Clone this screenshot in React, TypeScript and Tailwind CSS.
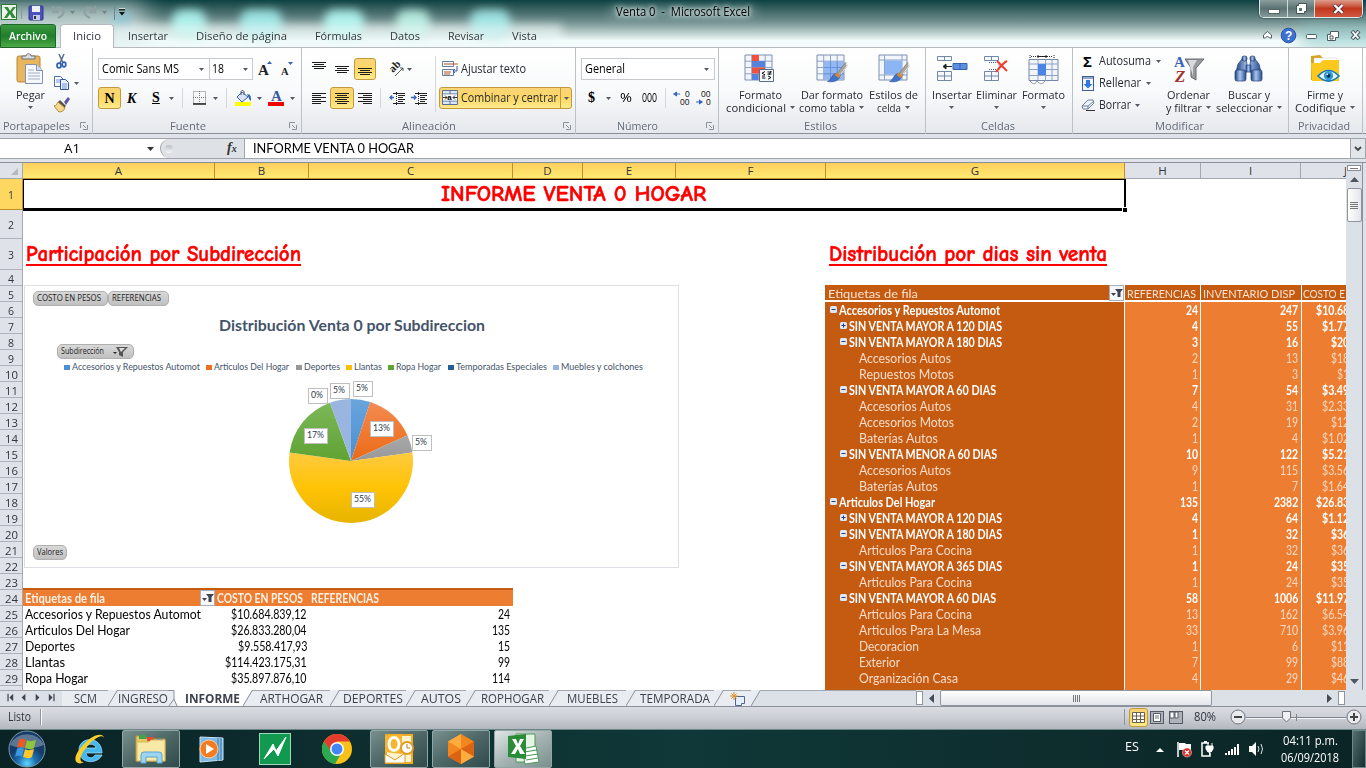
import React, { useLayoutEffect, useRef } from "react";

const UI = "font-['Open_Sans','Noto_Sans',sans-serif]";
const CELL = "font-['Lato','Open_Sans',sans-serif]";

/* Text squeezed or stretched to a given width in pixels. */
function T({ w, children, className = "" }: { w: number; children: string; className?: string }) {
  const outer = useRef<HTMLSpanElement>(null);
  const inner = useRef<HTMLSpanElement>(null);
  useLayoutEffect(() => {
    const o = outer.current;
    const i = inner.current;
    if (!o || !i) return;
    i.style.transform = "none";
    const natural = i.getBoundingClientRect().width;
    o.style.width = w + "px";
    i.style.transform = `scaleX(${w / natural})`;
  }, [w, children]);
  return (
    <span ref={outer} className={`inline-block shrink-0 whitespace-pre ${className}`}>
      <span ref={inner} className="inline-block origin-left whitespace-pre">{children}</span>
    </span>
  );
}

const Arrow = ({ c = "" }: { c?: string }) => (
  <svg className={`shrink-0 ${c}`} width="5" height="3" viewBox="0 0 5 3"><path d="M0 0h5L2.5 3z" fill="#555b66" /></svg>
);
const VSep = ({ c = "" }: { c?: string }) => <div className={`h-5 w-px shrink-0 bg-[#d3d6dc] ${c}`} />;

const Launcher = () => (
  <svg width="8" height="8" viewBox="0 0 8 8" fill="none" stroke="#8c929c"><path d="M.5 6V.5H6M3 3l3 3" /><path d="M7.500 3v4.500H3" /></svg>
);

function Group({ w, label, lw, launcher, children }: { w: string; label: string; lw: number; launcher?: boolean; children: React.ReactNode }) {
  return (
    <div className={`flex h-[86px] shrink-0 flex-col border-r border-[#bcc0c7] ${w}`}>
      <div className="flex h-[70px] shrink-0">{children}</div>
      <div className="flex h-[15px] items-center pr-1 text-[11.500px] leading-[14px] text-[#646b7a]">
        <div className={`flex flex-1 justify-center ${launcher ? "pr-2" : "pr-0"}`}><T w={lw}>{label}</T></div>
        {launcher && <Launcher />}
      </div>
    </div>
  );
}

function Big({ w, icon, a, aw, b, bw, arrow = true }: { w: string; icon: React.ReactNode; a: string; aw: number; b?: string; bw?: number; arrow?: boolean }) {
  return (
    <div className={`flex shrink-0 flex-col items-center pt-[5px] text-[11.500px] leading-[13px] text-[#262b34] ${w}`}>
      <div className="flex h-8 items-center justify-center">{icon}</div>
      <div className="mt-[3px] flex h-[13px]"><T w={aw}>{a}</T></div>
      <div className="flex h-[13px] items-center gap-1">
        {b && bw && <T w={bw}>{b}</T>}
        {arrow && <Arrow />}
      </div>
    </div>
  );
}

const Grid = () => (
  <g>
    <path d="M1 1h27v25H1z" fill="#f2f6fc" stroke="#7b8fb2" />
    <path d="M1 7.200h27M1 13.500h27M1 19.800h27M7.700 1v25M14.500 1v25M21.200 1v25" stroke="#8fa2c4" />
  </g>
);
const Brush = () => (
  <g>
    <path d="M30 8L20 21l3 2.500L31 12z" fill="#a9a59c" stroke="#77736b" strokeWidth=".7" />
    <path d="M30 8l1 4-6 8" stroke="#eee" fill="none" />
    <path d="M19.500 19.500l4 3.500c-1 4-6 5.500-12 4.500 4-1.500 4-7 8-8z" fill="#3f72c9" stroke="#2b549c" strokeWidth=".6" />
    <path d="M18.500 21l2-2.500 4 3.500-2 2z" fill="#d9892d" />
  </g>
);

const CondIcon = () => (
  <svg width="32" height="30" viewBox="0 0 32 30"><Grid />
    <path d="M8 1h7v6H8zM8 13.500h13v6H8z" fill="#f0503c" /><path d="M8 7h13v6H8zM8 20h6v6H8z" fill="#5582dd" />
    <path d="M15.500 15.500h14v12h-14z" fill="#f8f9fc" stroke="#596b89" />
    <path d="M21 17.500l-3 1.700 3 1.700M18 22h3M23.500 18h4M23.500 20h4M27 17l-2 4M18 24h3.500M24 22l3 1.500-3 1.700" fill="none" stroke="#111" />
  </svg>
);
const TableIcon = () => (
  <svg width="32" height="30" viewBox="0 0 32 30"><Grid /><path d="M8 7.500h20v18H8z" fill="#84aef0" fillOpacity=".85" />
    <path d="M8 13.500h20M8 19.800h20M14.500 7.500v18M21.200 7.500v18" stroke="#6590db" /><Brush /></svg>
);
const StyleIcon = () => (
  <svg width="32" height="30" viewBox="0 0 32 30"><path d="M1 1h28v25H1z" fill="#f2f6fc" stroke="#7b8fb2" />
    <path d="M6.500 1v25M24 1v25M1 6h28M1 21h28" stroke="#8fa2c4" /><path d="M7 6.500h17v14H7z" fill="#8cb5f3" /><Brush /></svg>
);
const Cells3 = () => (
  <g fill="#f5f8fc" stroke="#7387a6"><path d="M1.500 2.500h14v4h-14zM8.500 2.500v4M1.500 17.500h14v9h-14zM8.500 17.500v9M1.500 22h14" /></g>
);
const InsIcon = () => (
  <svg width="32" height="30" viewBox="0 0 32 30"><Cells3 /><path d="M17 9.500h14v6H17zM24 9.500v6" fill="#5d8fe0" stroke="#3462ad" /><path d="M16 12.500H8M10 10l-3 2.500 3 2.500z" stroke="#222" fill="#222" /></svg>
);
const DelIcon = () => (
  <svg width="26" height="30" viewBox="0 0 26 30"><Cells3 /><path d="M6 8.500h10v7H6" stroke="#345fb0" fill="none" strokeDasharray="1 1" /><path d="M14 7l10 10M24 7c-4 2-7 6-11 11" stroke="#f2402c" strokeWidth="2" fill="none" /></svg>
);
const FmtIcon = () => (
  <svg width="32" height="31" viewBox="0 0 32 31"><path d="M2 1v4M26 1v4" stroke="#222" strokeDasharray="1 1" /><path d="M3 2.500h22" stroke="#333" strokeDasharray="1 1" /><path d="M9 2.500h10M10 1v3M18 1v3" stroke="#222" />
    <path d="M1 5.500h29v21H1z" fill="#f2f6fc" stroke="#7387a6" /><path d="M1 10h29M1 15.500h29M1 21.500h29M10 5.500v21M17.500 5.500v21M24 5.500v21" stroke="#8fa2c4" /><path d="M10 10h8v11h-8z" fill="#4a85e6" /><path d="M2 27c3 4 6 3 7 0 3 4 6 3 8 0" fill="#fff" stroke="#8995a8" /></svg>
);
const SortIcon = () => (
  <svg className="overflow-visible" width="30" height="30" viewBox="0 0 30 30"><text x="0" y="12.500" fontFamily="Liberation Serif" fontWeight="bold" fontSize="15" fill="#3b62b5">A</text><text x="1" y="27.500" fontFamily="Liberation Serif" fontWeight="bold" fontStyle="italic" fontSize="17" fill="#a23530">Z</text>
    <path d="M11 5h19l-8 9v12l-5-3v-9z" fill="#999b9f" stroke="#65686d" /><path d="M14 6h9l-4 7v9" fill="#d9dadd" /></svg>
);
const FindIcon = () => (
  <svg width="29" height="28" viewBox="0 0 29 28"><defs><linearGradient id="bin" x2="1"><stop stopColor="#1f427f" /><stop offset=".45" stopColor="#a9c5ef" /><stop offset="1" stopColor="#294d8d" /></linearGradient></defs>
    <g fill="url(#bin)" stroke="#233f78" strokeWidth=".7"><path d="M4 9l4-5h4l1 5v8H2zM16 9l1-5h4l4 5 2 8H16z" /><path d="M12 10h5v7h-5z" /><rect x="1" y="15" width="11" height="11" rx="2" /><rect x="17" y="15" width="11" height="11" rx="2" /><rect x="8" y="1" width="5" height="5" rx="2" /><rect x="16" y="1" width="5" height="5" rx="2" /></g></svg>
);
const SignIcon = () => (
  <svg width="30" height="30" viewBox="0 0 30 30"><path d="M1 2l9-1 3 3h13v22H1z" fill="#d8a11b" /><path d="M4 4h23v8H4z" fill="#fff" stroke="#c9c9c9" strokeWidth=".5" /><path d="M1 9h9l3-3h16v21H2z" fill="#fbc91d" />
    <path d="M8 22q10.500-11 21 0-10.500 10-21 0z" fill="#e8f6ff" stroke="#167bbd" strokeWidth="1.700" /><circle cx="18.500" cy="21.700" r="4.700" fill="#2c9bd8" /><circle cx="18.500" cy="21.700" r="2" fill="#0b2f55" /><circle cx="17.300" cy="20.300" r=".9" fill="#fff" /></svg>
);
const PasteIcon = () => (
  <svg width="28" height="31" viewBox="0 0 28 31"><rect x="1" y="3" width="23" height="26" rx="2" fill="#e8b65c" stroke="#bd8437" /><path d="M6 6V3h4c0-3 5-3 5 0h4v3z" fill="#d9dde2" stroke="#6b7077" /><path d="M9.500 11.500h11l6 6v13h-17z" fill="#f5f8fd" stroke="#8492ad" /><path d="M20.500 11.500v6h6" fill="#d5dfef" stroke="#8492ad" /><path d="M12 17h6M12 20h12M12 23h12M12 26h12" stroke="#a2b0c8" /></svg>
);

const lineSets: Record<string, number[][]> = {
  top: [[0, 14, 1], [2, 12, 3], [0, 14, 5], [2, 12, 7]],
  mid: [[0, 14, 3], [2, 12, 5], [0, 14, 7], [2, 12, 9]],
  bot: [[0, 14, 6], [2, 12, 8], [0, 14, 10], [2, 12, 12]],
  left: [[0, 14, 1], [0, 9, 3], [0, 14, 5], [0, 9, 7], [0, 14, 9], [0, 9, 11]],
  center: [[0, 14, 1], [2, 12, 3], [0, 14, 5], [2, 12, 7], [0, 14, 9], [2, 12, 11]],
  right: [[0, 14, 1], [5, 14, 3], [0, 14, 5], [5, 14, 7], [0, 14, 9], [5, 14, 11]],
};
const Lines = ({ k }: { k: string }) => (
  <svg className="shrink-0" width="14" height={k === "bot" ? 14 : 12} viewBox={`0 0 14 ${k === "bot" ? 14 : 12}`}>{lineSets[k].map((l, i) => <path key={i} d={`M${l[0]} ${l[2] + 0.5}H${l[1]}`} stroke="#1c1c1c" />)}</svg>
);
const Indent = ({ out }: { out?: boolean }) => (
  <svg className="shrink-0" width="16" height="13" viewBox="0 0 16 13"><path d="M4 1.500h12M9 3.500h7M9 5.500h5M9 7.500h7M9 9.500h5M4 11.500h12" stroke="#222" /><path d="M7.500 0v13" stroke="#222" strokeDasharray="1 1" /><path d={out ? "M0 5.500h5M3 3.500l2 2-2 2" : "M5 5.500H1M3 3.500l-2 2 2 2"} stroke="#3766be" strokeWidth="1.300" fill="none" /></svg>
);
const HOT = "border border-[#c29a3d] rounded-[3px] bg-linear-to-b from-[#fbd477] via-[#fcd765] to-[#feeb8b]";

function TitleBar() {
  return (
    <div className="relative h-6 shrink-0 z-10">
      <div className="flex h-6 items-center">
        <svg className="ml-px -mt-px" width="120" height="20" viewBox="0 0 120 20">
          <rect x=".5" y="2.500" width="15" height="15" fill="#eaf5ea" stroke="#2e7a35" /><path d="M3 5l4 0 2 4 3-4h3l-4 5 4 6h-4l-2-4-3 4H3l4-6z" fill="#2f8b37" />
          <path d="M20.500 4v13" stroke="#8b9999" />
          <rect x="28" y="4" width="14" height="14" rx="1" fill="#4b52bb" stroke="#2e3690" /><path d="M31 4h8v6h-8z" fill="#eef1fb" /><path d="M32 13h7v5h-7z" fill="#c3c9ec" /><path d="M33 14h2v3h-2z" fill="#333" />
          <path d="M52 4v6h6M53 9c4-6 11-3 9 3-1 2-3 3-5 4" fill="none" stroke="#8fa1a1" strokeWidth="2.300" /><path d="M69 9h5l-2.500 3zM101 9h5l-2.500 3z" fill="#6d8180" />
          <path d="M94 4v6h-6M93 9c-4-6-11-3-9 3 1 2 3 3 5 4" fill="none" stroke="#8fa1a1" strokeWidth="2.300" />
          <path d="M113.500 5v13" stroke="#6f8584" />
        </svg>
        <svg className="-ml-[3px]" width="8" height="8" viewBox="0 0 8 8"><path d="M1 .8h6" stroke="#eee" /><path d="M1 1.800h6" stroke="#111" strokeWidth="1.300" /><path d="M1 4h6L4 7.500z" fill="#111" /></svg>
        <div className="flex-1" />
        <div className="mr-[3px] flex h-[18px] w-[104px] self-start overflow-hidden rounded-b-[5px] border border-t-0 border-[#dfe9e9] shadow-[0_0_2px_#123]">
          <div className="flex w-[28px] items-center justify-center border-r border-[#cddada] bg-linear-to-b from-[#8c9e9e] via-[#5c7373] to-[#869a9a]"><svg width="12" height="12"><rect x=".5" y="6.500" width="11" height="4" fill="#fff" stroke="#566" /></svg></div>
          <div className="flex w-[27px] items-center justify-center border-r border-[#cddada] bg-linear-to-b from-[#8c9e9e] via-[#5c7373] to-[#869a9a]"><svg width="12" height="13"><path d="M3.500 1.500h8v8h-2v2h-8v-8h2z" fill="#fff" stroke="#455" /><rect x="4" y="6" width="3" height="3" fill="#577" /></svg></div>
          <div className="flex flex-1 items-center justify-center bg-linear-to-b from-[#dd9d8d] via-[#c2371c] to-[#cf5840]"><svg width="13" height="12" viewBox="0 0 13 12"><path d="M2 2l8.500 8M10.500 2L2 10" stroke="#534" strokeWidth="4" /><path d="M2.500 2l8 8M10.500 2l-8 8" stroke="#fff" strokeWidth="2.400" /></svg></div>
        </div>
      </div>
      <div className="absolute left-[616px] top-[4px] text-[12px] leading-4 text-black [text-shadow:0_0_6px_#fff,0_0_8px_#d5e4e4,0_0_4px_#a8c0c0]"><T w={134}>{"Venta 0  -  Microsoft Excel"}</T></div>
    </div>
  );
}

function Backdrop() {
  return (
    <div className="absolute inset-0 overflow-hidden bg-linear-to-b from-[#0b4242] from-0% via-[#708f8e] via-45% to-[#f3fcfb] to-85%">
      <div className="absolute -left-10 top-1 h-12 w-[185px] bg-[#d0dfdf] opacity-80 blur-md" />
      <div className="absolute left-[172px] top-[10px] h-7 w-[34px] rounded-[10px] bg-[#a5ece6] blur-[5px]" />
      <div className="absolute left-[240px] top-[10px] h-7 w-[42px] rounded-[10px] bg-[#9ae3e3] blur-[5px]" />
      <div className="absolute left-[324px] top-[10px] h-7 w-[40px] rounded-[10px] bg-[#a9efe8] blur-[5px]" />
      <div className="absolute left-[396px] top-[10px] h-7 w-[34px] rounded-[10px] bg-[#b3e8dc] blur-[5px]" />
      <div className="absolute left-[470px] top-[10px] h-7 w-[40px] rounded-[10px] bg-[#9ae0e0] blur-[5px]" />
      <div className="absolute left-[112px] top-6 h-8 w-[450px] bg-[#eefaf9] opacity-60 blur-[5px]" />
      <div className="absolute left-[112px] top-3 h-3 w-5 rounded-full bg-[#7fc4d8] opacity-70 blur-[4px]" />
      <div className="absolute left-[610px] top-2 h-2 w-[145px] bg-[#b6cccc] opacity-50 blur-[6px]" />
      <div className="absolute left-[1300px] top-6 h-6 w-[90px] bg-[#86c4c4] opacity-60 blur-[8px]" />
    </div>
  );
}

const menu: [string, string, number][] = [["Insertar", "ml-[14px]", 40], ["Diseño de página", "ml-[28px]", 91], ["Fórmulas", "ml-[28px]", 47], ["Datos", "ml-[28px]", 30], ["Revisar", "ml-[28px]", 36], ["Vista", "ml-[28px]", 25]];

function Menu() {
  return (
    <div className="relative z-10 flex h-6 shrink-0 items-stretch border-b border-[#b6babf] text-[11.500px] text-[#33383f]">
      <div className="-mb-px flex w-14 items-center justify-center rounded-t-[3px] border border-[#1d652b] bg-linear-to-b from-[#3c9a3f] via-[#1e7d2c] to-[#4cab45] font-semibold text-white"><T w={38}>Archivo</T></div>
      <div className="-mb-px ml-1 flex w-[54px] items-center justify-center rounded-t-[4px] border border-b-0 border-[#b6babf] bg-white pb-[2px]"><T w={28}>Inicio</T></div>
      {menu.map((m) => <div key={m[0]} className={`flex items-center pt-px ${m[1]}`}><T w={m[2]}>{m[0]}</T></div>)}
      <div className="flex-1" />
      <svg className="mr-[3px] mt-[3px]" width="102" height="17" viewBox="0 0 102 17">
        <path d="M2.500 8l4-3.500 4 3.500v3H8.500L6.500 9l-2 2h-2z" fill="#fff" stroke="#4e5c63" /><circle cx="27.500" cy="8.500" r="7.300" fill="#3d71d0" stroke="#2a529f" /><text x="24" y="13" fontSize="12" fontWeight="bold" fill="#fff" fontFamily="Liberation Sans">?</text>
        <rect x="45.500" y="7.500" width="10" height="4" rx="1" fill="#fff" stroke="#4e5c63" /><path d="M69.500 4.500h8v6h-3v3h-8v-6h3z" fill="#fff" stroke="#4e5c63" /><path d="M69 9h3v3h-3z" fill="#fff" stroke="#4e5c63" /><path d="M91 4l7 8M98 4l-7 8" stroke="#4e5c63" strokeWidth="4" /><path d="M91.500 4.500l6 7M97.500 4.500l-6 7" stroke="#fff" strokeWidth="1.800" />
      </svg>
    </div>
  );
}

function Ribbon() {
  return (
    <div className="flex h-[86px] shrink-0 gap-px border-b border-[#8a8f98] bg-linear-to-b from-white via-[#f9fafb] to-[#e5e8ed]">
      <Group w="w-[93px]" label="Portapapeles" lw={67} launcher>
        <div className="ml-[14px] flex w-8 flex-col items-center pt-[5px] text-[11.500px] leading-[13px] text-[#262b34]"><PasteIcon /><div className="mt-1 flex"><T w={29}>Pegar</T></div><Arrow c="mt-[5px]" /></div>
        <div className="ml-2 flex flex-col gap-[7px] pt-[6px]">
          <svg width="16" height="15" viewBox="0 0 16 15"><path d="M5 0l4 9M10 0L6 9" stroke="#5b6c8a" strokeWidth="1.500" /><ellipse cx="5" cy="11.500" rx="2" ry="2.400" fill="none" stroke="#2f5fb5" strokeWidth="1.700" /><ellipse cx="10" cy="10.500" rx="1.800" ry="2.300" fill="none" stroke="#2f5fb5" strokeWidth="1.700" /></svg>
          <div className="flex items-center gap-1"><svg width="16" height="14" viewBox="0 0 16 14"><path d="M.5.500h6l3 3v7h-9z" fill="#fff" stroke="#4a6dad" /><path d="M6.500 3.500h5l3 3v7h-8z" fill="#eaf1ff" stroke="#31579f" /><path d="M2 4h4M2 6h4M8 8h5M8 10h5M8 12h5" stroke="#6f93d5" /></svg><Arrow /></div>
          <svg width="17" height="16" viewBox="0 0 17 16"><path d="M10 5l4-5 2 2-4 6z" fill="#5d55a0" /><path d="M6 3l6 6-2 2-6-6z" fill="#554f49" /><path d="M4 5l7 6c-1 3-4 4-6 4L0 9c2 0 3-2 4-4z" fill="#f4d98c" stroke="#b28b33" /></svg>
        </div>
      </Group>
      <Group w="w-[208px]" label="Fuente" lw={36} launcher>
        <div className="ml-1 flex flex-col pt-[10px]">
          <div className="flex h-[22px] items-center text-[12px] leading-4 text-black">
            <div className="flex h-[22px] w-[112px] items-center justify-between border border-[#c6c9ce] bg-white pl-[3px] pr-[5px]"><T w={77}>Comic Sans MS</T><Arrow /></div>
            <div className="-ml-px flex h-[22px] w-[44px] items-center justify-between border border-[#c6c9ce] bg-white pl-[2px] pr-1"><T w={12}>18</T><Arrow /></div>
            <svg className="ml-1 overflow-visible" width="38" height="20" viewBox="0 0 38 20"><text x="1" y="15.500" fontFamily="Liberation Serif" fontWeight="bold" fontSize="15" fill="#222">A</text><path d="M10 5l2.500-3L15 5z" fill="#3462bd" /><text x="24" y="15.500" fontFamily="Liberation Serif" fontWeight="bold" fontSize="10.500" fill="#222">A</text><path d="M31 3h5l-2.500 3z" fill="#3462bd" /></svg>
          </div>
          <div className="mt-[7px] flex h-[22px] items-center font-['Liberation_Serif',serif] text-[14px] font-bold text-black">
            <div className={`flex h-[22px] w-[23px] items-center justify-center ${HOT}`}>N</div>
            <span className="ml-[6px] w-[13px] italic">K</span><span className="ml-[12px] w-[9px] leading-none underline">S</span>
            <Arrow c="ml-[8px]" /><VSep c="ml-2" />
            <svg className="ml-[10px]" width="13" height="14"><path d="M.5.5h12v12H.5zM6.500 0v13M0 6.500h13" fill="none" stroke="#777" strokeDasharray="1 1" /><path d="M0 13h13" stroke="#222" strokeWidth="1.500" /></svg>
            <Arrow c="ml-[7px]" /><VSep c="ml-2" />
            <svg className="ml-2" width="17" height="17" viewBox="0 0 17 17"><path d="M7 2l6 5-6 5-5-5z" fill="#d7e4f8" stroke="#3e629f" /><path d="M6 5V2c0-2 3-2 3 0v3" fill="none" stroke="#556" /><path d="M12 4c4 0 4 3 4 7-2-1-2-3-3-5z" fill="#2e62bd" /><path d="M0 12h16v4H0z" fill="#ffff00" /></svg>
            <Arrow c="ml-[5px]" />
            <svg className="ml-[6px] overflow-visible" width="17" height="17" viewBox="0 0 17 17"><text x="3" y="11" fontFamily="Liberation Serif" fontWeight="bold" fontSize="15" fill="#34599f">A</text><path d="M0 12h16v4H0z" fill="#f00000" /></svg>
            <Arrow c="ml-[5px]" />
          </div>
        </div>
      </Group>
      <Group w="w-[273px]" label="Alineación" lw={54} launcher>
        <div className="flex w-[132px] shrink-0 flex-col pt-[10px]">
          <div className="flex h-[22px] items-center"><div className="ml-[9px] pb-1"><Lines k="top" /></div><div className="ml-[9px]"><Lines k="mid" /></div><div className={`ml-[5px] flex h-[22px] w-[22px] items-center justify-center ${HOT}`}><Lines k="bot" /></div>
            <svg className="ml-[13px] overflow-visible" width="17" height="16" viewBox="0 0 17 16"><text x="0" y="0" transform="translate(4 12) rotate(-45)" fontFamily="Liberation Serif" fontSize="11" fontWeight="bold" fill="#222">ab</text><path d="M6 15L14 7M11 7h3v3" stroke="#555" fill="none" /></svg><Arrow c="ml-px" /></div>
          <div className="mt-[7px] flex h-[22px] items-center"><div className="ml-[9px] flex"><Lines k="left" /></div><div className={`ml-1 flex h-[22px] w-6 items-center justify-center ${HOT}`}><Lines k="center" /></div><div className="ml-[4px] flex"><Lines k="right" /></div><VSep c="ml-2" /><div className="ml-2"><Indent /></div><div className="ml-[6px]"><Indent out /></div></div>
        </div>
        <div className="mt-2 h-14 w-px bg-[#d3d6dc]" />
        <div className="ml-[3px] flex flex-col pt-[10px] text-[12px] leading-4 text-[#262b34]">
          <div className="flex h-[22px] items-center pl-[3px]"><svg width="16" height="16" viewBox="0 0 16 16"><path d="M.5.500h11v5H.5zM.5 8.500h11v6H.5z" fill="#f6f8fb" stroke="#687b9b" /><path d="M2 3h14M2 11h7M2 13h6" stroke="#ab5d31" /><path d="M15 5v5h-3M13 8l-2 2 2 2" fill="none" stroke="#3157a8" /></svg><T w={65} className="ml-[3px]">Ajustar texto</T></div>
          <div className={`mt-[7px] flex h-[22px] w-[133px] items-center pl-[2px] ${HOT}`}><svg width="16" height="16" viewBox="0 0 16 16"><path d="M.5.500h15v14H.5z" fill="#dce8fa" stroke="#596e92" /><path d="M.5 4h15M.5 11h15M8 0v4M8 11v4" stroke="#596e92" /><path d="M1 4.500h14v6H1z" fill="#fff" /><path d="M1 7.500h4M3 5.500l2 2-2 2M15 7.500h-4M13 5.500l-2 2 2 2" stroke="#333" fill="none" /><text x="5.300" y="10" fontSize="8" fontWeight="bold" fontFamily="Liberation Sans">a</text></svg><T w={97} className="ml-[3px]">Combinar y centrar</T><div className="ml-[2px] flex h-full items-center border-l border-[#c29a3d] pl-[3px]"><Arrow /></div></div>
        </div>
      </Group>
      <Group w="w-[142px]" label="Número" lw={41} launcher>
        <div className="ml-[4px] flex flex-col pt-[10px] text-[12px] leading-4 text-black">
          <div className="flex h-[22px] w-[134px] items-center justify-between border border-[#c6c9ce] bg-white pl-[3px] pr-[5px]"><T w={40}>General</T><Arrow /></div>
          <div className="mt-[7px] flex h-[22px] items-center"><b className="ml-[7px] w-[9px] font-['Liberation_Serif',serif] text-[14px]">$</b><Arrow c="ml-[9px]" /><T w={12} className="ml-[9px]">%</T><T w={15} className="ml-[10px]">000</T><VSep c="ml-[8px]" />
            <svg className="ml-2 overflow-visible" width="40" height="16" viewBox="0 0 40 16" fontFamily="Liberation Sans" fontSize="8.500" fill="#222"><path d="M6 4H1M3 2L0 4l3 2M22 12h5M25 10l3 2-3 2" stroke="#3766be" fill="#3766be" strokeWidth="1.200" /><text x="11" y="7">0</text><text x="6" y="15">00</text><text x="27" y="7">00</text><text x="32" y="15">0</text></svg></div>
        </div>
      </Group>
      <Group w="w-[206px]" label="Estilos" lw={33}>
        <Big w="ml-1 w-[72px]" icon={<CondIcon />} a="Formato" aw={43} b="condicional" bw={60} />
        <Big w="w-[71px]" icon={<TableIcon />} a="Dar formato" aw={62} b="como tabla" bw={56} />
        <Big w="w-[53px]" icon={<StyleIcon />} a="Estilos de" aw={49} b="celda" bw={24} />
      </Group>
      <Group w="w-[146px]" label="Celdas" lw={34}>
        <Big w="ml-[3px] w-[43px]" icon={<InsIcon />} a="Insertar" aw={40} />
        <Big w="ml-px w-[44px]" icon={<DelIcon />} a="Eliminar" aw={41} />
        <Big w="ml-[3px] w-[45px]" icon={<FmtIcon />} a="Formato" aw={43} />
      </Group>
      <Group w="w-[215px]" label="Modificar" lw={49}>
        <div className="ml-[6px] flex w-[84px] shrink-0 flex-col pt-[2px] text-[12px] leading-4 text-[#262b34]">
          <div className="flex h-[22px] items-center"><b className="w-[19px] pl-[3px] text-[15px] text-black">Σ</b><T w={52}>Autosuma</T><Arrow c="ml-[5px]" /></div>
          <div className="flex h-[22px] items-center"><svg className="mr-[5px] ml-[2px]" width="12" height="15"><rect x=".5" y=".5" width="11" height="14" fill="#f1f6ff" stroke="#3d5d99" /><path d="M0 2h12" stroke="#3d5d99" /><path d="M4 4h4v4h2.500L6 12.500 1.500 8H4z" fill="#3676dc" /></svg><T w={42}>Rellenar</T><Arrow c="ml-[5px]" /></div>
          <div className="flex h-[22px] items-center"><svg className="mr-[4px] ml-px" width="14" height="12" viewBox="0 0 14 12"><path d="M1 7l6-6h5l1 3-6 6H2z" fill="#eef2fa" stroke="#72809c" /><path d="M1 7h6l6-5M7 7v3" fill="none" stroke="#72809c" /><path d="M5 11.500h9" stroke="#333" /></svg><T w={32}>Borrar</T><Arrow c="ml-[4px]" /></div>
        </div>
        <Big w="ml-[2px] w-[45px]" icon={<SortIcon />} a="Ordenar" aw={43} b="y filtrar" bw={36} />
        <Big w="ml-[4px] w-[67px]" icon={<FindIcon />} a="Buscar y" aw={42} b="seleccionar" bw={57} />
      </Group>
      <Group w="w-[73px]" label="Privacidad" lw={52}>
        <Big w="ml-[5px] w-[60px]" icon={<SignIcon />} a="Firme y" aw={36} b="Codifique" bw={51} />
      </Group>
    </div>
  );
}

function FormulaBar() {
  return (
    <div className="flex h-[29px] shrink-0 items-stretch border-b border-[#8a8f98] bg-[#dfe3e9] pb-[3px] pt-1">
      <div className="flex w-[160px] items-center border-y border-[#a0a4ab] bg-white text-[12px]"><span className="w-[142px] text-center"><T w={16}>A1</T></span><svg className="ml-[5px]" width="7" height="4"><path d="M0 0h7L3.500 4z" fill="#333" /></svg></div>
      <div className="flex w-[85px] items-center border-y border-[#a0a4ab] border-r bg-white"><div className="flex h-full w-full items-center rounded-l-full border-l border-[#a0a4ab] bg-[#dee1e6] pl-1"><div className="h-2 w-2 rounded-full bg-linear-to-b from-[#b9bec6] to-[#f8f8f8]" /><span className="ml-[54px] font-['Liberation_Serif',serif] text-[14px] font-bold italic leading-4 text-[#333]">f<span className="text-[10px]">x</span></span></div></div>
      <div className={`flex flex-1 items-center border-y border-[#a0a4ab] bg-white pl-2 text-[13px] text-black ${CELL}`}><T w={161}>INFORME VENTA 0 HOGAR</T></div>
      <div className="flex w-4 items-center justify-center border border-[#a0a4ab] bg-[#e2e5ea]"><svg width="8" height="6"><path d="M1 1l3 3 3-3" fill="none" stroke="#444" strokeWidth="1.800" /></svg></div>
    </div>
  );
}

const cols: [string, string, boolean][] = [["A", "w-[192px]", true], ["B", "w-[94px]", true], ["C", "w-[204px]", true], ["D", "w-[70px]", true], ["E", "w-[93px]", true], ["F", "w-[150px]", true], ["G", "w-[299px]", true], ["H", "w-[76px]", false], ["I", "w-[100px]", false]];

type P = [number, string, string, number, number | string, number | string, string];
/* indent level, toggle mark, label, label width, references, stock, cost */
const pivot: P[] = [
  [0, "-", "Accesorios y Repuestos Automot", 161, 24, 247, "$10.68"],
  [1, "+", "SIN VENTA MAYOR A 120 DIAS", 153, 4, 55, "$1.77"],
  [1, "-", "SIN VENTA MAYOR A 180 DIAS", 153, 3, 16, "$20"],
  [2, "", "Accesorios Autos", 92, 2, 13, "$18"],
  [2, "", "Repuestos Motos", 95, 1, 3, "$1"],
  [1, "-", "SIN VENTA MAYOR A 60 DIAS", 147, 7, 54, "$3.49"],
  [2, "", "Accesorios Autos", 92, 4, 31, "$2.33"],
  [2, "", "Accesorios Motos", 95, 2, 19, "$12"],
  [2, "", "Baterías Autos", 79, 1, 4, "$1.02"],
  [1, "-", "SIN VENTA MENOR A 60 DIAS", 148, 10, 122, "$5.21"],
  [2, "", "Accesorios Autos", 92, 9, 115, "$3.56"],
  [2, "", "Baterías Autos", 79, 1, 7, "$1.64"],
  [0, "-", "Articulos Del Hogar", 96, 135, 2382, "$26.83"],
  [1, "+", "SIN VENTA MAYOR A 120 DIAS", 153, 4, 64, "$1.12"],
  [1, "-", "SIN VENTA MAYOR A 180 DIAS", 153, 1, 32, "$36"],
  [2, "", "Articulos Para Cocina", 113, 1, 32, "$36"],
  [1, "-", "SIN VENTA MAYOR A 365 DIAS", 153, 1, 24, "$35"],
  [2, "", "Articulos Para Cocina", 113, 1, 24, "$35"],
  [1, "-", "SIN VENTA MAYOR A 60 DIAS", 147, 58, 1006, "$11.97"],
  [2, "", "Articulos Para Cocina", 113, 13, 162, "$6.54"],
  [2, "", "Articulos Para La Mesa", 122, 33, 710, "$3.96"],
  [2, "", "Decoracion", 60, 1, 6, "$11"],
  [2, "", "Exterior", 41, 7, 99, "$88"],
  [2, "", "Organización Casa", 99, 4, 29, "$46"],
];
const numW = (s: string) => [...s].reduce((a, c) => a + (c === "." || c === "," ? 3 : 6.05), 0);
const Num = ({ v }: { v: string | number }) => <T w={numW(String(v))}>{String(v)}</T>;
const Filter = ({ c = "" }: { c?: string }) => (
  <svg className={`shrink-0 ${c}`} width="15" height="16" viewBox="0 0 15 16"><rect x=".5" y=".5" width="14" height="15" fill="#f7f8fb" stroke="#a9adb5" /><path d="M6 4h8l-2.500 3v5H8.500V7z" fill="#3d4350" /><path d="M2 8h5L4.500 11z" fill="#3d4350" /></svg>
);

function Pivot() {
  return (
    <div className={`flex w-[521px] flex-col overflow-hidden text-[12.500px] leading-4 ${CELL}`}>
      <div className="flex h-[15px] items-center text-[12px] leading-[15px] text-[#fbe3d3]">
        <div className="mr-px flex h-full w-[299px] items-center justify-between bg-[#c55a11] pl-[3px]"><T w={90} className="pt-[2px]">Etiquetas de fila</T><Filter /></div>
        <div className="mr-px flex h-full w-[75px] items-center bg-[#c55a11] pl-[2px] pt-px"><T w={69}>REFERENCIAS</T></div>
        <div className="mr-px flex h-full w-[100px] items-center bg-[#c55a11] pl-[2px] pt-px"><T w={92}>INVENTARIO DISP</T></div>
        <div className="flex h-full flex-1 items-center overflow-hidden bg-[#c55a11] pl-px pt-px"><T w={42}>COSTO E</T></div>
      </div>
      <div className="flex h-[390px] pt-[2px]">
        <div className="mr-px flex w-[299px] shrink-0 flex-col bg-[#c55a11]">
          {pivot.map((r, i) => (
            <div key={i} className={`flex h-4 shrink-0 items-center ${r[0] === 0 ? "pl-[5px]" : r[0] === 1 ? "pl-[15px]" : "pl-[34px]"} ${r[0] < 2 ? "font-bold text-white" : "text-[#fadcc8]"}`}>
              {r[1] && <svg className="mr-[2px] mb-px" width="7" height="7"><rect width="7" height="7" rx="1.500" fill="#dce8fa" /><path d="M1.500 3.500h4" stroke="#1f3b75" />{r[1] === "+" && <path d="M3.500 1.500v4" stroke="#1f3b75" />}</svg>}
              <T w={r[3]} className="pt-[2px]">{r[2]}</T>
            </div>
          ))}
        </div>
        {[4, 5, 6].map((k) => (
          <div key={k} className={`flex shrink-0 flex-col items-end bg-[#ed7d31] ${k === 4 ? "mr-px w-[75px] pr-[2px]" : k === 5 ? "mr-px w-[100px] pr-[3px]" : "w-[47px]"}`}>
            {pivot.map((r, i) => <div key={i} className={`flex h-4 shrink-0 items-center pt-[2px] ${r[0] < 2 ? "font-bold text-white" : "text-[#fbd9c2]"}`}><Num v={r[k] as string} /></div>)}
          </div>
        ))}
      </div>
    </div>
  );
}

const slices: [number, number, string][] = [[0, 0.05, "s1"], [0.05, 0.182, "s2"], [0.182, 0.228, "s3"], [0.228, 0.772, "s4"], [0.772, 0.945, "s5"], [0.945, 1, "s7"]];
const grads: [string, string, string][] = [["s1", "#6aa4dc", "#4a90d3"], ["s2", "#f38b52", "#ec6a14"], ["s3", "#a9a9a9", "#989898"], ["s4", "#ffca40", "#e6b400"], ["s5", "#7db75a", "#5fa332"], ["s7", "#98b6df", "#98b6df"]];
const legend: [number, string, number, string][] = [[64, "Accesorios y Repuestos Automot", 128, "#4c90d3"], [206, "Articulos Del Hogar", 75, "#ed6f21"], [296, "Deportes", 36, "#989898"], [346, "Llantas", 28, "#fbbf00"], [388, "Ropa Hogar", 45, "#5fa332"], [448, "Temporadas Especiales", 91, "#255e91"], [553, "Muebles y colchones", 82, "#92b4df"]];
const labels: [number, number, string][] = [[308, 388, "0%"], [330, 383, "5%"], [353, 381, "5%"], [370, 421, "13%"], [412, 435, "5%"], [304, 428, "17%"], [351, 492, "55%"]];

function Chart() {
  const pt = (f: number) => `${351 + 62 * Math.sin(f * 2 * Math.PI)} ${461 - 62 * Math.cos(f * 2 * Math.PI)}`;
  return (
    <svg width="656" height="283" viewBox="24 285 656 283" className="ml-px shrink-0" fontFamily="Lato, Open Sans, sans-serif">
      <defs>
        {grads.map((g) => <linearGradient key={g[0]} id={g[0]} x1="0" y1="0" x2="0" y2="1"><stop stopColor={g[1]} />{g[0] === "s4" && <stop offset=".5" stopColor="#ffc305" />}<stop offset="1" stopColor={g[2]} /></linearGradient>)}
        <linearGradient id="pill" x2="0" y2="1"><stop stopColor="#dadada" /><stop offset="1" stopColor="#bfbfbf" /></linearGradient>
      </defs>
      <rect x="24.500" y="285.500" width="654" height="282" fill="#fff" stroke="#dce0e6" />
      {([[33, 291, 75, "COSTO EN PESOS", 64], [108, 291, 61, "REFERENCIAS", 49], [57, 344, 77, "Subdirección", 43], [33, 545, 34, "Valores", 26]] as [number, number, number, string, number][]).map((p) => (
        <g key={p[3]}><rect x={p[0] + 0.5} y={p[1] + 0.5} width={p[2] - 1} height="14" rx="4.500" fill="url(#pill)" stroke="#b0b0b0" /><text x={p[0] + 4} y={p[1] + 10} fontSize="8.500" textLength={p[4]} lengthAdjust="spacingAndGlyphs" fill="#222" fontFamily="Open Sans">{p[3]}</text></g>
      ))}
      <path d="M116 347h12l-5 5v5l-4-2v-3z" fill="#555" /><path d="M119 348h6l-4 4z" fill="#ddd" /><path d="M113 352h4l-2 2z" fill="#222" />
      <text x="219" y="331" fontSize="15" fontWeight="bold" fill="#44546a" textLength="266" lengthAdjust="spacingAndGlyphs">Distribución Venta 0 por Subdireccion</text>
      {legend.map((l) => <g key={l[1]}><rect x={l[0]} y="365" width="6" height="5" fill={l[3]} /><text x={l[0] + 8} y="370" fontSize="9.500" fill="#44546a" textLength={l[2]} lengthAdjust="spacingAndGlyphs">{l[1]}</text></g>)}
      {slices.map((s) => <path key={s[2]} fill={`url(#${s[2]})`} d={`M351 461L${pt(s[0])}A62 62 0 ${s[1] - s[0] > 0.5 ? 1 : 0} 1 ${pt(s[1])}z`} />)}
      {labels.map((l, i) => { const w = l[2].length === 3 ? 23 : 19; return <g key={i}><rect x={l[0] + 0.5} y={l[1] + 0.5} width={w} height="15" fill="#fff" stroke="#bfbfbf" /><text x={l[0] + 3} y={l[1] + 10} fontSize="9" fill="#2f3a4a" textLength={l[2].length === 3 ? 17 : 12} lengthAdjust="spacingAndGlyphs">{l[2]}</text></g>; })}
    </svg>
  );
}

const table: [string, number, string, string][] = [["Accesorios y Repuestos Automot", 176, "$10.684.839,12", "24"], ["Articulos Del Hogar", 105, "$26.833.280,04", "135"], ["Deportes", 50, "$9.558.417,93", "15"], ["Llantas", 40, "$114.423.175,31", "99"], ["Ropa Hogar", 63, "$35.897.876,10", "114"]];
const COMIC = "font-['Comic_Sans_MS','Comic_Neue','Open_Sans',sans-serif] font-bold text-[#ff0000] [-webkit-text-stroke:0.5px_#ff0000]";

function Sheet() {
  return (
    <div className="flex h-[527px] shrink-0 bg-white">
      <div className="flex w-[23px] shrink-0 flex-col border-r border-[#a3a8b0] bg-[#dfe3e9] text-[11.500px] text-[#30353e]">
        <div className="flex h-4 shrink-0 items-end justify-end border-b border-[#a3a8b0] pb-[3px] pr-1"><svg width="7" height="7"><path d="M7 0v7H0z" fill="#b4b9c1" /></svg></div>
        {Array.from({ length: 29 }, (_, i) => (
          <div key={i} className={`flex shrink-0 items-center justify-center border-b pt-[2px] ${i === 0 ? "-mr-px h-[31px] border-r border-[#c28f2e] bg-[#fdd75f]" : "border-[#aeb3bb]"} ${i === 1 ? "h-[29px]" : i === 2 ? "h-[31px]" : i > 2 ? "h-4" : ""} leading-[14px]`}><T w={i < 9 ? 6 : 13}>{String(i + 1)}</T></div>
        ))}
      </div>
      <div className="flex w-[1323px] shrink-0 flex-col overflow-hidden">
        <div className="flex h-4 shrink-0 text-[11.500px] leading-[16px] text-[#30353e]">
          {cols.map((c) => <div key={c[0]} className={`shrink-0 border-b border-r text-center ${c[1]} ${c[2] ? "border-[#c28f2e] bg-linear-to-b from-[#fdcf5b] to-[#feea73]" : "border-[#a3a8b0] bg-[#dfe3e9]"}`}>{c[0]}</div>)}
          <div className="flex-1 overflow-hidden border-b border-[#a3a8b0] bg-[#dfe3e9] pl-[43px]">J</div>
        </div>
        <div className="relative flex h-8 w-[1103px] shrink-0 justify-center border-2 border-b-3 border-l border-t border-black">
          <div className={`-ml-[2px] pt-px text-[22px] leading-[27px] ${COMIC}`}><T w={265}>INFORME VENTA 0 HOGAR</T></div>
          <div className="absolute -bottom-[5px] -right-[4px] h-[6px] w-[6px] border border-white bg-black" />
        </div>
        <div className={`mt-[32px] flex h-[26px] shrink-0 items-start text-[22px] leading-[22px] ${COMIC}`}>
          <div className="ml-[3px] h-[23px] border-b-2 border-[#ff0000]"><T w={275}>Participación por Subdirección</T></div>
          <div className="ml-[528px] h-[23px] border-b-2 border-[#ff0000]"><T w={278}>Distribución por dias sin venta</T></div>
        </div>
        <div className="mt-4 flex h-[405px] shrink-0">
          <div className="flex w-[802px] shrink-0 flex-col overflow-hidden">
            <Chart />
            <div className={`mt-5 flex w-[490px] flex-col text-[12.500px] leading-4 text-black ${CELL}`}>
              <div className="flex h-[18px] shrink-0 items-center border-t-2 border-[#c55a11] bg-[#ed7d31] font-bold text-[#fff1e5]">
                <div className="flex w-[192px] items-center justify-between pl-[2px]"><T w={80} className="pt-px">Etiquetas de fila</T><Filter /></div><T w={86} className="ml-[2px] pt-px">COSTO EN PESOS</T><T w={68} className="ml-2 pt-px">REFERENCIAS</T>
              </div>
              {table.map((r) => (
                <div key={r[0]} className="flex h-4 shrink-0 items-center pt-[2px]"><div className="flex w-[192px] pl-[2px]"><T w={r[1]}>{r[0]}</T></div><div className="flex w-[94px] justify-end pr-[2px]"><Num v={r[2]} /></div><div className="flex w-[204px] justify-end pr-[3px]"><Num v={r[3]} /></div></div>
              ))}
            </div>
          </div>
          <Pivot />
        </div>
      </div>
      <div className="flex w-4 shrink-0 flex-col items-center bg-[#dce0e7]">
        <div className="mt-[2px] flex h-[6px] w-[14px] items-center justify-center border border-[#888e98] bg-white"><i className="h-px w-2 bg-[#777]" /></div>
        <svg className="mt-[6px]" width="9" height="5"><path d="M0 5h9L4.500 0z" fill="#4f5560" /></svg>
        <div className="mt-[6px] flex h-[34px] w-[15px] flex-col items-center justify-center gap-[1px] rounded-[2px] border border-[#8f959f] bg-linear-to-r from-white to-[#e2e5ea]"><i className="h-px w-2 bg-[#777]" /><i className="h-px w-2 bg-[#777]" /><i className="h-px w-2 bg-[#777]" /><i className="h-px w-2 bg-[#777]" /></div>
        <div className="flex-1" />
        <svg className="mb-[6px]" width="9" height="5"><path d="M0 0h9L4.500 5z" fill="#4f5560" /></svg>
      </div>
      <div className="w-1 border-l border-[#8a8f98] bg-[#dfe3e9]" />
    </div>
  );
}

const tabs: [string, number, string, boolean][] = [["SCM", 23, "w-[46px]", false], ["INGRESO", 50, "w-[50px]", false], ["INFORME", 55, "w-[65px] pl-1", true], ["ARTHOGAR", 63, "w-[77px]", false], ["DEPORTES", 60, "w-[66px]", false], ["AUTOS", 40, "w-[50px]", false], ["ROPHOGAR", 63, "w-[73px]", false], ["MUEBLES", 51, "w-[67px]", false], ["TEMPORADA", 70, "w-[78px]", false]];

function Bottom() {
  return (
    <>
      <div className="flex h-[17px] shrink-0 items-stretch border-b border-[#8a8f98] bg-[#dce0e7] text-[12.500px] leading-4 text-[#3c424d]">
        <svg className="shrink-0 border-t border-[#a3a8b0]" width="62" height="16" viewBox="0 0 62 16"><path d="M12 3v8L8 7zM25 3v8l-4-4zM36 3v8l4-4zM50 3v8l4-4z" fill="#3f4550" /><path d="M6.500 3v8M55.500 3v8" stroke="#3f4550" strokeWidth="1.300" /></svg>
        {tabs.map((t) => (
          <div key={t[0]} className="flex shrink-0">
            <div className={`flex items-center justify-center ${t[2]} ${t[3] ? "bg-white pt-px font-bold" : "border-t border-[#a3a8b0] bg-[#e9ecf1]"}`}><T w={t[1]}>{t[0]}</T></div>
            <svg width="10" height="16" viewBox="0 0 10 16"><path d="M0 0h10v16H0z" fill={t[0] === "INGRESO" ? "#fff" : "#e9ecf1"} /><path d={t[0] === "INGRESO" ? "M0 0h6v8l4 8H0z" : "M0 0h9L0 16z"} fill={t[3] ? "#fff" : "#e9ecf1"} />{t[0] !== "INGRESO" && <path d="M9 .5h1" stroke="#a3a8b0" />}<path d={t[0] === "INGRESO" ? "M0 .5h6V9l3 7M1 16l5-7" : "M0 16L9.500 0"} stroke="#8a909a" fill="none" /></svg>
          </div>
        ))}
        <div className="flex shrink-0 items-center border-t border-[#a3a8b0] bg-[#e9ecf1] pl-[6px] pr-[6px]"><svg width="15" height="14" viewBox="0 0 15 14"><path d="M5.500 4.500h9v7h-3v2h-6z" fill="#e7effc" stroke="#4e6694" /><path d="M4 0v8M0 4h8M1.500 1.500l5 5M6.500 1.500l-5 5" stroke="#e59123" /></svg></div>
        <svg className="shrink-0" width="10" height="16"><path d="M0 0h10L0 16z" fill="#e9ecf1" /><path d="M0 16L9.500 0" stroke="#8a909a" /></svg>
        <div className="flex-1 border-t border-[#a3a8b0]" />
        <div className="my-px w-[7px] border border-[#8f959f] bg-white" />
        <div className="flex w-[17px] items-center justify-center"><svg width="5" height="9"><path d="M5 0v9L0 4.500z" fill="#444a55" /></svg></div>
        <div className="flex w-[272px] items-center justify-center gap-px rounded-[2px] border border-[#8f959f] bg-linear-to-b from-white to-[#e2e5ea]"><i className="h-[7px] w-px bg-[#777]" /><i className="h-[7px] w-px bg-[#777]" /><i className="h-[7px] w-px bg-[#777]" /><i className="h-[7px] w-px bg-[#777]" /></div>
        <div className="w-[115px]" />
        <div className="flex w-[11px] items-center"><svg width="5" height="9"><path d="M0 0v9l5-4.500z" fill="#444a55" /></svg></div>
        <div className="my-px mr-[21px] w-[7px] border border-[#8f959f] bg-white" />
      </div>
      <div className="flex h-[22px] shrink-0 items-center bg-linear-to-b from-[#d9dce1] via-[#cbced4] to-[#b3b7be] pb-[2px] text-[12px] text-[#30353e]">
        <T w={23} className="ml-2">Listo</T><div className="ml-[9px] h-4 w-px bg-[#8f949c]" /><div className="h-4 w-px bg-white" />
        <div className="flex-1" />
        <div className="mr-1 h-4 w-px bg-[#8f949c]" />
        <div className={`flex h-[19px] w-[19px] items-center justify-center ${HOT}`}><svg width="13" height="11"><path d="M.5.5h12v10H.5zM.5 4h12M.5 7.500h12M4.500 0v11M8.500 0v11" fill="#fff" stroke="#6a624b" /></svg></div>
        <svg className="ml-[2px]" width="14" height="13"><rect x=".5" y=".5" width="13" height="12" fill="#aeb2b9" stroke="#555b65" /><path d="M3.500 2.500h7v8h-7z" fill="#fff" stroke="#555b65" /><path d="M5 5h4M5 7h4" stroke="#777" /></svg>
        <svg className="ml-[5px]" width="14" height="13"><rect x=".5" y=".5" width="13" height="12" fill="#aeb2b9" stroke="#555b65" /><path d="M1 1h4v6H1zM6 1h3v6H6z" fill="#fff" stroke="#555b65" /></svg>
        <T w={22} className="ml-[11px]">80%</T>
        <svg className="ml-[12px]" width="138" height="18" viewBox="1228 0 138 18"><path d="M1246 9.500h100" stroke="#7e848d" /><path d="M1246 10.500h100" stroke="#f5f5f5" /><path d="M1296.500 6v7" stroke="#7e848d" /><path d="M1282.500 3.500h8v6.500l-4 4-4-4z" fill="#eef0f3" stroke="#6e747e" />
          <circle cx="1238" cy="9" r="7" fill="#e8eaed" stroke="#6e747e" /><path d="M1234 9h8" stroke="#444" strokeWidth="2" /><circle cx="1354" cy="9" r="7" fill="#e8eaed" stroke="#6e747e" /><path d="M1350 9h8M1354 5v8" stroke="#444" strokeWidth="2" /></svg>
      </div>
    </>
  );
}

const TASK = "flex h-[38px] w-[58px] shrink-0 items-center justify-center rounded-[2px] border border-[#93a5a4] bg-linear-to-br";
const TASK_DIM = "from-[#78908e] via-[#4d6766] to-[#2f4b4b]";

function Taskbar() {
  return (
    <div className="flex h-[39px] shrink-0 items-center border-t border-[#6b8787] bg-linear-to-r from-[#0a2325] via-[#103838] via-50% to-[#0b2425]">
      <svg className="ml-[7px]" width="40" height="38" viewBox="0 0 40 38"><defs><radialGradient id="orb" cy=".9"><stop stopColor="#5fd9ff" /><stop offset=".5" stopColor="#1e71b4" /><stop offset="1" stopColor="#153c68" /></radialGradient></defs><circle cx="20" cy="19" r="18" fill="url(#orb)" stroke="#7e9ba8" /><path d="M3 15a18 16 0 0134 0c-12 4-22 5-34 0z" fill="#fff" fillOpacity=".3" /><path d="M12 10c3-2 5-1 7 0l-2 8c-3-2-5-1-7 0z" fill="#ed5b25" /><path d="M20 10c3 2 5 1 9 0l-2 8c-3 2-6 1-9 0z" fill="#8dc63b" /><path d="M10 19c3-2 5-1 7 0l-2 8c-3-2-5-1-7 0z" fill="#3d98df" /><path d="M18 19c3 2 5 1 9 0l-2 8c-3 2-6 1-9 0z" fill="#fcc82c" /></svg>
      <svg className="ml-[27px]" width="32" height="34" viewBox="0 0 32 34"><path fillRule="evenodd" d="M28 21H12c1 6 7 6 9 2h7C24 32 6 33 5 19 4 4 28 3 28 21zM12 16h10c-1-5-9-5-10 0z" fill="#45b8f0" stroke="#a5e3ff" strokeWidth=".7" /><path d="M30 6c-1-6-11-3-18 4C3 18-2 29 4 31c2 1 4 0 6-1-5 1-5-6 2-14C19 7 28 1 30 6z" fill="#f9ce2d" /></svg>
      <div className={`${TASK} ${TASK_DIM} ml-[16px]`}><svg width="34" height="34" viewBox="0 0 34 34"><path d="M2 4h9l2 3h18v22H2z" fill="#e8c767" stroke="#bd9436" /><path d="M5 3h7v4H5z" fill="#41a34a" /><path d="M13 5h7v4h-7z" fill="#e14b35" /><path d="M22 7h7v4h-7z" fill="#4387dd" /><path d="M3 10h12l2-2h14v21H3z" fill="#f9e9a7" stroke="#d7b75a" /><path d="M7 31v-8q0-3 3-3h15q3 0 3 3v8h-5v-6H12v6z" fill="#9dd4f2" stroke="#5ba5d1" /></svg></div>
      <svg className="ml-[18px]" width="28" height="30" viewBox="0 0 28 30"><path d="M2 3l23 1v22L2 28z" fill="#7db9e5" stroke="#c9e4f5" /><path d="M20 4v23M23 4v22" stroke="#397cad" /><circle cx="11" cy="15" r="9" fill="#f47b20" stroke="#fbd0a5" /><path d="M8 10l8 5-8 5z" fill="#fff" /></svg>
      <svg className="ml-[33px]" width="32" height="32" viewBox="0 0 32 32"><rect x=".5" y=".5" width="31" height="31" fill="#11994f" stroke="#9ed9b7" /><path d="M5 26L14 11l3 7L27 4l-8 19-4-7z" fill="#fff" stroke="#fff" strokeLinejoin="round" /></svg>
      <svg className="ml-[31px]" width="30" height="30" viewBox="0 0 30 30"><circle cx="15" cy="15" r="15" fill="#fbc116" /><path d="M15 15L9 16 2 7.500A15 15 0 0013 30l7-12z" fill="#2da94f" /><path d="M2 7.500C8 -2.500 22 -2.500 28 7.500H15L9 17z" fill="#e33b2e" /><circle cx="15" cy="15" r="7" fill="#fff" /><circle cx="15" cy="15" r="5.500" fill="#4285f4" /></svg>
      <div className={`${TASK} ${TASK_DIM} ml-[18px]`}><svg width="34" height="34" viewBox="0 0 34 34"><path d="M4 3h26v28H4z" fill="#fff3cf" stroke="#efad25" strokeWidth="2" /><path d="M3 22l10 6 10-7v10H3z" fill="#fff" stroke="#db9a23" /><path d="M3 4l17-2v20l-17-2z" fill="#f7b42d" /><ellipse cx="12" cy="12" rx="5" ry="6.500" fill="none" stroke="#fff" strokeWidth="3" /><circle cx="25" cy="16" r="6" fill="#fff" stroke="#e39b22" strokeWidth="2" /><path d="M25 12v4h3" fill="none" stroke="#c07a17" /></svg></div>
      <div className={`${TASK} ${TASK_DIM} ml-1`}><svg width="30" height="34" viewBox="0 0 30 34"><path d="M15 2l13 7.500v15L15 32 2 24.500v-15z" fill="#f4861e" /><path d="M15 2v15L2 9.500zM15 17l13 7.500L15 32z" fill="#ffac3f" /><path d="M15 17L2 24.500 15 32zM15 17L28 9.500v15z" fill="#dc6214" /></svg></div>
      <div className={`${TASK} ml-1 from-[#e0e7e6] via-[#a5b4b3] to-[#78908e]`}><svg width="34" height="34" viewBox="0 0 34 34"><path d="M10 2h19v28H10z" fill="#e5f4e4" stroke="#4b9955" /><path d="M16 17l14-3 3 16-14 2z" fill="#fff" stroke="#4b9955" /><path d="M18 20l13-2M19 24l13-2M20 28l12-2" stroke="#4b9955" /><path d="M2 4l18-2v25L2 25z" fill="#2a8b39" /><path d="M6 7h4l2 5 2-5h4l-4 7 5 8h-5l-2-5-3 5H5l5-8z" fill="#fff" /></svg></div>
      <div className="flex-1" />
      <div className="flex items-center text-[12px] leading-[17px] text-white">
        <T w={14} className="mb-[6px]">ES</T>
        <svg className="ml-4" width="110" height="18" viewBox="1155 0 110 18"><path d="M1156 12h8l-4-4z" fill="#fff" /><path d="M1178 2v15" stroke="#fff" strokeWidth="1.500" /><path d="M1179 3h6l1 1h5v7h-6l-1-1h-5z" fill="#fff" /><circle cx="1187" cy="12.500" r="4.500" fill="#d92b22" stroke="#fff" strokeWidth=".5" /><path d="M1185 10.500l4 4M1189 10.500l-4 4" stroke="#fff" strokeWidth="1.300" />
          <path d="M1209 3h-7v13h8v-3" fill="none" stroke="#fff" strokeWidth="1.500" /><path d="M1204 1h3v2h-3z" fill="#fff" /><path d="M1206 6h7v3l-2 3h-3l-2-3zM1208 3v3M1212 3v3M1209.500 12v3" fill="#fff" stroke="#fff" />
          <path d="M1225 15h2v-2h-2zM1228 15h2v-4h-2zM1231 15h2V9h-2zM1234 15h2V7h-2zM1237 15h2V4h-2z" fill="#fff" /><path d="M1249 6h3l4-4v14l-4-4h-3z" fill="#fff" /><path d="M1258 6q2 3 0 6M1261 4q3 5 0 10" fill="none" stroke="#d6e3e3" /></svg>
        <div className="ml-[15px] flex w-[60px] flex-col items-center"><T w={55}>04:11 p.m.</T><T w={58}>06/09/2018</T></div>
        <div className="ml-3 h-[38px] w-[14px] border border-[#6d8786] bg-linear-to-br from-[#54706f] to-[#152f30]" />
      </div>
    </div>
  );
}

export default function App() {
  return (
    <div className={`relative flex h-[768px] w-[1366px] flex-col overflow-hidden bg-[#dfe3e9] ${UI}`}>
      <div className="relative flex h-[48px] shrink-0 flex-col"><Backdrop /><TitleBar /><Menu /></div>
      <Ribbon />
      <FormulaBar />
      <Sheet />
      <Bottom />
      <Taskbar />
    </div>
  );
}
